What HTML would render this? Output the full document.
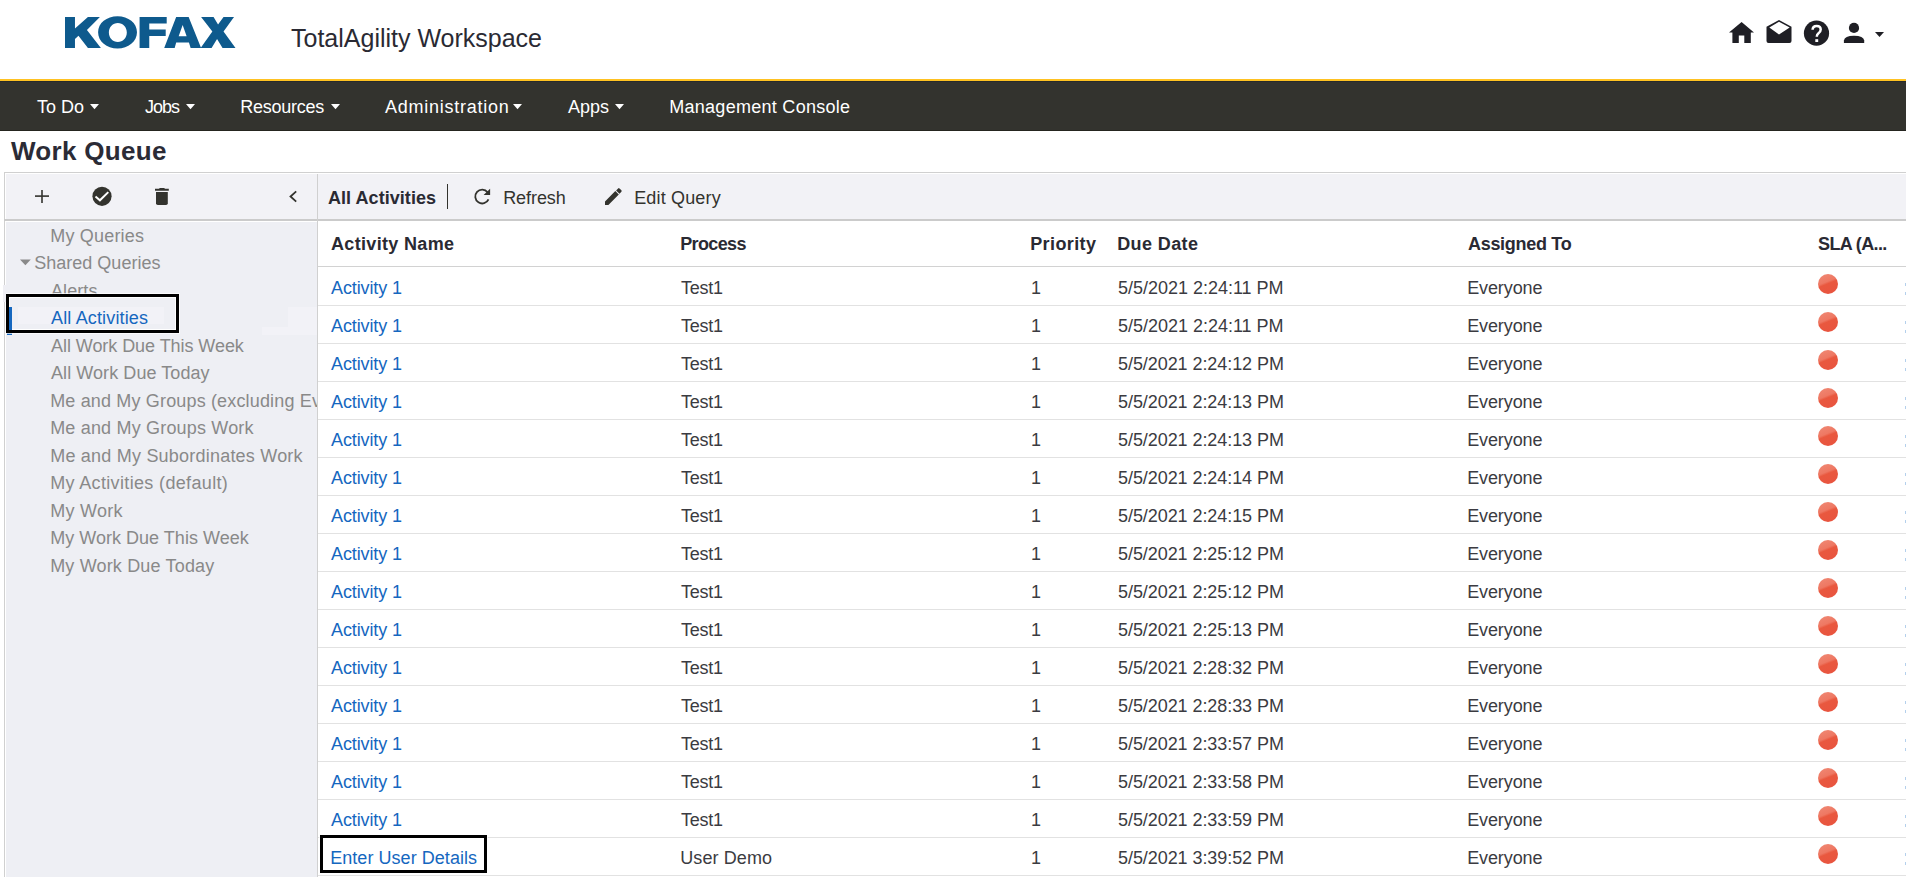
<!DOCTYPE html>
<html><head><meta charset="utf-8"><title>Work Queue</title>
<style>
*{margin:0;padding:0;box-sizing:border-box}
html,body{width:1906px;height:877px;overflow:hidden;background:#fff;font-family:"Liberation Sans",sans-serif;position:relative}
.a{position:absolute}
.t{position:absolute;white-space:nowrap;font-size:18px;line-height:20px;height:20px}
.nav{color:#fff}
.side{color:#898989}
.lnk{color:#1567BF}
.cell{color:#3b3b41}
.hd{font-weight:bold;color:#2a2a33}
.tb{color:#33332e}
</style></head><body>
<div class="a" style="left:0;top:0;width:1906px;height:79px;background:#fff"></div>
<div class="a" style="left:0;top:79px;width:1906px;height:2px;background:#ffc222"></div>
<div class="a" style="left:0;top:81px;width:1906px;height:50px;background:#33332e;border-top:1px solid #272a2b;border-bottom:1px solid #25251f"></div>
<svg class="a" style="left:65px;top:16px" width="171" height="33" viewBox="100 60 1715 330">
<g fill="#0e5a8d">
<path d="M100,70 L200,70 L200,185 L330,70 L450,70 L320,200 L460,380 L330,380 L235,258 L200,290 L200,380 L100,380 Z"/>
<path fill-rule="evenodd" d="M627,62 C735,62 822,130 822,222 C822,315 735,385 627,385 C518,385 432,315 432,222 C432,130 518,62 627,62 Z M630,130 C580,130 540,170 540,225 C540,280 580,320 630,320 C680,320 720,280 720,225 C720,170 680,130 630,130 Z"/>
<path d="M848,70 L1120,70 L1120,135 L945,135 L945,195 L1110,195 L1110,260 L945,260 L945,380 L848,380 Z"/>
<path fill-rule="evenodd" d="M1215,70 L1340,70 L1465,380 L1360,380 L1343,325 L1215,325 L1200,380 L1095,380 Z M1240,262 L1320,262 L1280,150 Z"/>
<path d="M1465,70 L1590,70 L1635,145 L1690,70 L1795,70 L1690,215 L1810,380 L1680,380 L1625,290 L1570,380 L1460,380 L1578,215 Z"/>
</g></svg>
<div class="t" style="left:291px;top:24px;font-size:25px;line-height:28px;height:28px;color:#2a2a33">TotalAgility Workspace</div>
<svg class="a" style="left:1725px;top:16px" width="165" height="34" viewBox="1725 16 165 34">
<g fill="#1f1f25">
<path d="M1741.6,22 L1754,32.5 L1750.8,32.5 L1750.8,43 L1744.3,43 L1744.3,35.4 L1738.8,35.4 L1738.8,43 L1732.4,43 L1732.4,32.5 L1729,32.5 Z"/>
<path fill-rule="evenodd" d="M1779,20 L1791.5,26.8 L1791.5,41 Q1791.5,43 1789.5,43 L1768.5,43 Q1766.5,43 1766.5,41 L1766.5,26.8 Z M1779,21.8 L1769.3,27.6 L1779,34.4 L1789.7,27.6 Z"/>
<circle cx="1816.5" cy="33.2" r="12.6"/>
<circle cx="1854" cy="27.9" r="5.1"/>
<path d="M1843.9,43 L1843.9,40.5 Q1844.5,35.7 1854,35.7 Q1863.6,35.7 1864.2,40.5 L1864.2,43 Z"/>
<path d="M1875,32 L1884,32 L1879.5,37 Z"/>
</g>
<path d="M1812.6,29.8 Q1812.6,25.9 1816.7,25.9 Q1820.7,25.9 1820.7,29.5 Q1820.7,31.7 1818.5,33.3 Q1816.8,34.6 1816.8,36.8" fill="none" stroke="#fff" stroke-width="2.5"/>
<rect x="1815.3" y="39.2" width="2.9" height="2.8" fill="#fff"/>
</svg>
<div class="t ft nav" style="left:37.00px;top:97px;letter-spacing:0.000px;">To Do</div>
<svg class="a" style="left:90px;top:104px" width="10" height="6" viewBox="0 0 10 6"><path d="M0,0 L9,0 L4.5,5.2 Z" fill="#fff"/></svg>
<div class="t ft nav" style="left:145.00px;top:97px;letter-spacing:-1.000px;">Jobs</div>
<svg class="a" style="left:186px;top:104px" width="10" height="6" viewBox="0 0 10 6"><path d="M0,0 L9,0 L4.5,5.2 Z" fill="#fff"/></svg>
<div class="t ft nav" style="left:240.20px;top:97px;letter-spacing:-0.250px;">Resources</div>
<svg class="a" style="left:331px;top:104px" width="10" height="6" viewBox="0 0 10 6"><path d="M0,0 L9,0 L4.5,5.2 Z" fill="#fff"/></svg>
<div class="t ft nav" style="left:385.00px;top:97px;letter-spacing:0.754px;">Administration</div>
<svg class="a" style="left:513px;top:104px" width="10" height="6" viewBox="0 0 10 6"><path d="M0,0 L9,0 L4.5,5.2 Z" fill="#fff"/></svg>
<div class="t ft nav" style="left:568.00px;top:97px;letter-spacing:0.000px;">Apps</div>
<svg class="a" style="left:615px;top:104px" width="10" height="6" viewBox="0 0 10 6"><path d="M0,0 L9,0 L4.5,5.2 Z" fill="#fff"/></svg>
<div class="t ft nav" style="left:669.20px;top:97px;letter-spacing:0.282px;">Management Console</div>
<div class="t" style="left:11px;top:136px;font-size:26px;line-height:30px;height:30px;font-weight:bold;color:#2b2b36;letter-spacing:0.3px">Work Queue</div>
<div class="a" style="left:4px;top:172px;width:1910px;height:710px;border:1px solid #d0d0d0;background:#fff"></div>
<div class="a" style="left:6px;top:174px;width:1900px;height:45px;background:#f2f2f6"></div>
<div class="a" style="left:4px;top:219px;width:1902px;height:2px;background:#cbcbcb"></div>
<div class="a" style="left:6px;top:222px;width:311px;height:655px;background:#eeeff4"></div>
<div class="a" style="left:317px;top:174px;width:1px;height:703px;background:#d0d0d0"></div>
<svg class="a" style="left:30px;top:184px" width="280" height="24" viewBox="30 184 280 24">
<g fill="#33332e">
<rect x="35" y="195.3" width="14" height="1.6"/>
<rect x="41.2" y="190" width="1.6" height="13"/>
<circle cx="102" cy="196.3" r="9.6"/>
<path d="M155,188.8 L159,188.8 Q159.3,187.9 160.2,187.9 L163.8,187.9 Q164.7,187.9 165,188.8 L168.8,188.8 L168.8,190.7 L155,190.7 Z"/>
<path d="M156,191.9 L167.8,191.9 L167.8,203.2 Q167.8,205 166,205 L157.8,205 Q156,205 156,203.2 Z"/>
</g>
<path d="M95.5,196.6 L99.9,200.3 L108.3,192.1" fill="none" stroke="#fff" stroke-width="2"/>
<path d="M296.2,191.3 L290.5,196.5 L296.2,201.7" fill="none" stroke="#33332e" stroke-width="1.8"/>
</svg>
<div class="t hd" style="left:328px;top:188px;color:#2a2a33;letter-spacing:0.05px">All Activities</div>
<div class="a" style="left:447px;top:184px;width:1px;height:25px;background:#33332e"></div>
<svg class="a" style="left:470px;top:184px" width="160" height="24" viewBox="470 184 160 24">
<path d="M487.6,192.3 A6.9,6.9 0 1 0 488.5,199.3" fill="none" stroke="#33332e" stroke-width="1.8"/>
<path d="M490.1,188.8 L490.1,195 L483.6,195 Z" fill="#33332e"/>
<path d="M605,201.4 L615.3,191.1 L618.8,194.5 L608.4,204.9 L605,204.9 Z M616.1,190.4 L618.1,188.4 Q618.8,187.8 619.5,188.4 L621.4,190.3 Q622,191 621.4,191.7 L619.5,193.7 Z" fill="#33332e"/>
</svg>
<div class="t ft tb" style="left:503.20px;top:188px;letter-spacing:-0.066px;">Refresh</div>
<div class="t ft tb" style="left:634.20px;top:188px;letter-spacing:0.156px;">Edit Query</div>
<div class="a" style="left:18px;top:307px;width:146px;height:17px;background:#f2f2f7"></div>
<div class="a" style="left:288px;top:307px;width:29px;height:20px;background:#f2f2f7"></div>
<div class="a" style="left:262px;top:327px;width:55px;height:8px;background:#f2f2f7"></div>
<div class="a" style="left:0;top:0;width:317px;height:877px;overflow:hidden">
<div class="t ft side" style="left:50.20px;top:226px;letter-spacing:0.200px;">My Queries</div>
<div class="t ft side" style="left:34.20px;top:253px;letter-spacing:0.016px;">Shared Queries</div>
<div class="t ft side" style="left:51.00px;top:281px;letter-spacing:0.080px;">Alerts</div>
<div class="t ft lnk" style="left:51.00px;top:308px;letter-spacing:0.154px;">All Activities</div>
<div class="t ft side" style="left:51.00px;top:336px;letter-spacing:-0.057px;">All Work Due This Week</div>
<div class="t ft side" style="left:51.00px;top:363px;letter-spacing:0.071px;">All Work Due Today</div>
<div class="t ft side" style="left:50.20px;top:391px;letter-spacing:0.16px;">Me and My Groups (excluding Everyone)</div>
<div class="t ft side" style="left:50.20px;top:418px;letter-spacing:0.180px;">Me and My Groups Work</div>
<div class="t ft side" style="left:50.20px;top:446px;letter-spacing:0.216px;">Me and My Subordinates Work</div>
<div class="t ft side" style="left:50.20px;top:473px;letter-spacing:0.346px;">My Activities (default)</div>
<div class="t ft side" style="left:50.20px;top:501px;letter-spacing:0.260px;">My Work</div>
<div class="t ft side" style="left:50.20px;top:528px;letter-spacing:0.024px;">My Work Due This Week</div>
<div class="t ft side" style="left:50.20px;top:556px;letter-spacing:0.167px;">My Work Due Today</div>
</div>
<svg class="a" style="left:20px;top:259px" width="12" height="7" viewBox="0 0 12 7"><path d="M0,0.6 L10.8,0.6 L5.4,6.2 Z" fill="#898989"/></svg>
<div class="a" style="left:7px;top:307px;width:5px;height:28px;background:#1567bf"></div>
<div class="t ft hd" style="left:331.00px;top:234px;letter-spacing:0.333px;">Activity Name</div>
<div class="t ft hd" style="left:680.20px;top:234px;letter-spacing:-0.633px;">Process</div>
<div class="t ft hd" style="left:1030.20px;top:234px;letter-spacing:0.400px;">Priority</div>
<div class="t ft hd" style="left:1117.20px;top:234px;letter-spacing:0.400px;">Due Date</div>
<div class="t ft hd" style="left:1468.00px;top:234px;letter-spacing:-0.300px;">Assigned To</div>
<div class="t ft hd" style="left:1818.00px;top:234px;letter-spacing:-0.625px;">SLA (A...</div>
<div class="a" style="left:318px;top:266px;width:1588px;height:1px;background:#d2d2d2"></div>
<div class="t ft lnk" style="left:331.00px;top:278px;letter-spacing:-0.111px;">Activity 1</div>
<div class="t ft cell" style="left:681.00px;top:278px;letter-spacing:-0.250px;">Test1</div>
<div class="t ft cell" style="left:1031.00px;top:278px;">1</div>
<div class="t ft cell" style="left:1118.00px;top:278px;letter-spacing:-0.012px;">5/5/2021 2:24:11 PM</div>
<div class="t ft cell" style="left:1467.20px;top:278px;letter-spacing:-0.114px;">Everyone</div>
<div class="a" style="left:1818px;top:274px;width:20px;height:20px;border-radius:50%;background:linear-gradient(158deg,#f08a76 0%,#ee7863 40%,#e9583f 49%,#e8533f 100%)"></div>
<div class="a" style="left:318px;top:305px;width:1588px;height:1px;background:#e2e2e2"></div>
<div class="t ft lnk" style="left:331.00px;top:316px;letter-spacing:-0.111px;">Activity 1</div>
<div class="t ft cell" style="left:681.00px;top:316px;letter-spacing:-0.250px;">Test1</div>
<div class="t ft cell" style="left:1031.00px;top:316px;">1</div>
<div class="t ft cell" style="left:1118.00px;top:316px;letter-spacing:-0.012px;">5/5/2021 2:24:11 PM</div>
<div class="t ft cell" style="left:1467.20px;top:316px;letter-spacing:-0.114px;">Everyone</div>
<div class="a" style="left:1818px;top:312px;width:20px;height:20px;border-radius:50%;background:linear-gradient(158deg,#f08a76 0%,#ee7863 40%,#e9583f 49%,#e8533f 100%)"></div>
<div class="a" style="left:318px;top:343px;width:1588px;height:1px;background:#e2e2e2"></div>
<div class="t ft lnk" style="left:331.00px;top:354px;letter-spacing:-0.111px;">Activity 1</div>
<div class="t ft cell" style="left:681.00px;top:354px;letter-spacing:-0.250px;">Test1</div>
<div class="t ft cell" style="left:1031.00px;top:354px;">1</div>
<div class="t ft cell" style="left:1118.00px;top:354px;letter-spacing:-0.067px;">5/5/2021 2:24:12 PM</div>
<div class="t ft cell" style="left:1467.20px;top:354px;letter-spacing:-0.114px;">Everyone</div>
<div class="a" style="left:1818px;top:350px;width:20px;height:20px;border-radius:50%;background:linear-gradient(158deg,#f08a76 0%,#ee7863 40%,#e9583f 49%,#e8533f 100%)"></div>
<div class="a" style="left:318px;top:381px;width:1588px;height:1px;background:#e2e2e2"></div>
<div class="t ft lnk" style="left:331.00px;top:392px;letter-spacing:-0.111px;">Activity 1</div>
<div class="t ft cell" style="left:681.00px;top:392px;letter-spacing:-0.250px;">Test1</div>
<div class="t ft cell" style="left:1031.00px;top:392px;">1</div>
<div class="t ft cell" style="left:1118.00px;top:392px;letter-spacing:-0.067px;">5/5/2021 2:24:13 PM</div>
<div class="t ft cell" style="left:1467.20px;top:392px;letter-spacing:-0.114px;">Everyone</div>
<div class="a" style="left:1818px;top:388px;width:20px;height:20px;border-radius:50%;background:linear-gradient(158deg,#f08a76 0%,#ee7863 40%,#e9583f 49%,#e8533f 100%)"></div>
<div class="a" style="left:318px;top:419px;width:1588px;height:1px;background:#e2e2e2"></div>
<div class="t ft lnk" style="left:331.00px;top:430px;letter-spacing:-0.111px;">Activity 1</div>
<div class="t ft cell" style="left:681.00px;top:430px;letter-spacing:-0.250px;">Test1</div>
<div class="t ft cell" style="left:1031.00px;top:430px;">1</div>
<div class="t ft cell" style="left:1118.00px;top:430px;letter-spacing:-0.067px;">5/5/2021 2:24:13 PM</div>
<div class="t ft cell" style="left:1467.20px;top:430px;letter-spacing:-0.114px;">Everyone</div>
<div class="a" style="left:1818px;top:426px;width:20px;height:20px;border-radius:50%;background:linear-gradient(158deg,#f08a76 0%,#ee7863 40%,#e9583f 49%,#e8533f 100%)"></div>
<div class="a" style="left:318px;top:457px;width:1588px;height:1px;background:#e2e2e2"></div>
<div class="t ft lnk" style="left:331.00px;top:468px;letter-spacing:-0.111px;">Activity 1</div>
<div class="t ft cell" style="left:681.00px;top:468px;letter-spacing:-0.250px;">Test1</div>
<div class="t ft cell" style="left:1031.00px;top:468px;">1</div>
<div class="t ft cell" style="left:1118.00px;top:468px;letter-spacing:-0.067px;">5/5/2021 2:24:14 PM</div>
<div class="t ft cell" style="left:1467.20px;top:468px;letter-spacing:-0.114px;">Everyone</div>
<div class="a" style="left:1818px;top:464px;width:20px;height:20px;border-radius:50%;background:linear-gradient(158deg,#f08a76 0%,#ee7863 40%,#e9583f 49%,#e8533f 100%)"></div>
<div class="a" style="left:318px;top:495px;width:1588px;height:1px;background:#e2e2e2"></div>
<div class="t ft lnk" style="left:331.00px;top:506px;letter-spacing:-0.111px;">Activity 1</div>
<div class="t ft cell" style="left:681.00px;top:506px;letter-spacing:-0.250px;">Test1</div>
<div class="t ft cell" style="left:1031.00px;top:506px;">1</div>
<div class="t ft cell" style="left:1118.00px;top:506px;letter-spacing:-0.067px;">5/5/2021 2:24:15 PM</div>
<div class="t ft cell" style="left:1467.20px;top:506px;letter-spacing:-0.114px;">Everyone</div>
<div class="a" style="left:1818px;top:502px;width:20px;height:20px;border-radius:50%;background:linear-gradient(158deg,#f08a76 0%,#ee7863 40%,#e9583f 49%,#e8533f 100%)"></div>
<div class="a" style="left:318px;top:533px;width:1588px;height:1px;background:#e2e2e2"></div>
<div class="t ft lnk" style="left:331.00px;top:544px;letter-spacing:-0.111px;">Activity 1</div>
<div class="t ft cell" style="left:681.00px;top:544px;letter-spacing:-0.250px;">Test1</div>
<div class="t ft cell" style="left:1031.00px;top:544px;">1</div>
<div class="t ft cell" style="left:1118.00px;top:544px;letter-spacing:-0.067px;">5/5/2021 2:25:12 PM</div>
<div class="t ft cell" style="left:1467.20px;top:544px;letter-spacing:-0.114px;">Everyone</div>
<div class="a" style="left:1818px;top:540px;width:20px;height:20px;border-radius:50%;background:linear-gradient(158deg,#f08a76 0%,#ee7863 40%,#e9583f 49%,#e8533f 100%)"></div>
<div class="a" style="left:318px;top:571px;width:1588px;height:1px;background:#e2e2e2"></div>
<div class="t ft lnk" style="left:331.00px;top:582px;letter-spacing:-0.111px;">Activity 1</div>
<div class="t ft cell" style="left:681.00px;top:582px;letter-spacing:-0.250px;">Test1</div>
<div class="t ft cell" style="left:1031.00px;top:582px;">1</div>
<div class="t ft cell" style="left:1118.00px;top:582px;letter-spacing:-0.067px;">5/5/2021 2:25:12 PM</div>
<div class="t ft cell" style="left:1467.20px;top:582px;letter-spacing:-0.114px;">Everyone</div>
<div class="a" style="left:1818px;top:578px;width:20px;height:20px;border-radius:50%;background:linear-gradient(158deg,#f08a76 0%,#ee7863 40%,#e9583f 49%,#e8533f 100%)"></div>
<div class="a" style="left:318px;top:609px;width:1588px;height:1px;background:#e2e2e2"></div>
<div class="t ft lnk" style="left:331.00px;top:620px;letter-spacing:-0.111px;">Activity 1</div>
<div class="t ft cell" style="left:681.00px;top:620px;letter-spacing:-0.250px;">Test1</div>
<div class="t ft cell" style="left:1031.00px;top:620px;">1</div>
<div class="t ft cell" style="left:1118.00px;top:620px;letter-spacing:-0.067px;">5/5/2021 2:25:13 PM</div>
<div class="t ft cell" style="left:1467.20px;top:620px;letter-spacing:-0.114px;">Everyone</div>
<div class="a" style="left:1818px;top:616px;width:20px;height:20px;border-radius:50%;background:linear-gradient(158deg,#f08a76 0%,#ee7863 40%,#e9583f 49%,#e8533f 100%)"></div>
<div class="a" style="left:318px;top:647px;width:1588px;height:1px;background:#e2e2e2"></div>
<div class="t ft lnk" style="left:331.00px;top:658px;letter-spacing:-0.111px;">Activity 1</div>
<div class="t ft cell" style="left:681.00px;top:658px;letter-spacing:-0.250px;">Test1</div>
<div class="t ft cell" style="left:1031.00px;top:658px;">1</div>
<div class="t ft cell" style="left:1118.00px;top:658px;letter-spacing:-0.067px;">5/5/2021 2:28:32 PM</div>
<div class="t ft cell" style="left:1467.20px;top:658px;letter-spacing:-0.114px;">Everyone</div>
<div class="a" style="left:1818px;top:654px;width:20px;height:20px;border-radius:50%;background:linear-gradient(158deg,#f08a76 0%,#ee7863 40%,#e9583f 49%,#e8533f 100%)"></div>
<div class="a" style="left:318px;top:685px;width:1588px;height:1px;background:#e2e2e2"></div>
<div class="t ft lnk" style="left:331.00px;top:696px;letter-spacing:-0.111px;">Activity 1</div>
<div class="t ft cell" style="left:681.00px;top:696px;letter-spacing:-0.250px;">Test1</div>
<div class="t ft cell" style="left:1031.00px;top:696px;">1</div>
<div class="t ft cell" style="left:1118.00px;top:696px;letter-spacing:-0.067px;">5/5/2021 2:28:33 PM</div>
<div class="t ft cell" style="left:1467.20px;top:696px;letter-spacing:-0.114px;">Everyone</div>
<div class="a" style="left:1818px;top:692px;width:20px;height:20px;border-radius:50%;background:linear-gradient(158deg,#f08a76 0%,#ee7863 40%,#e9583f 49%,#e8533f 100%)"></div>
<div class="a" style="left:318px;top:723px;width:1588px;height:1px;background:#e2e2e2"></div>
<div class="t ft lnk" style="left:331.00px;top:734px;letter-spacing:-0.111px;">Activity 1</div>
<div class="t ft cell" style="left:681.00px;top:734px;letter-spacing:-0.250px;">Test1</div>
<div class="t ft cell" style="left:1031.00px;top:734px;">1</div>
<div class="t ft cell" style="left:1118.00px;top:734px;letter-spacing:-0.067px;">5/5/2021 2:33:57 PM</div>
<div class="t ft cell" style="left:1467.20px;top:734px;letter-spacing:-0.114px;">Everyone</div>
<div class="a" style="left:1818px;top:730px;width:20px;height:20px;border-radius:50%;background:linear-gradient(158deg,#f08a76 0%,#ee7863 40%,#e9583f 49%,#e8533f 100%)"></div>
<div class="a" style="left:318px;top:761px;width:1588px;height:1px;background:#e2e2e2"></div>
<div class="t ft lnk" style="left:331.00px;top:772px;letter-spacing:-0.111px;">Activity 1</div>
<div class="t ft cell" style="left:681.00px;top:772px;letter-spacing:-0.250px;">Test1</div>
<div class="t ft cell" style="left:1031.00px;top:772px;">1</div>
<div class="t ft cell" style="left:1118.00px;top:772px;letter-spacing:-0.067px;">5/5/2021 2:33:58 PM</div>
<div class="t ft cell" style="left:1467.20px;top:772px;letter-spacing:-0.114px;">Everyone</div>
<div class="a" style="left:1818px;top:768px;width:20px;height:20px;border-radius:50%;background:linear-gradient(158deg,#f08a76 0%,#ee7863 40%,#e9583f 49%,#e8533f 100%)"></div>
<div class="a" style="left:318px;top:799px;width:1588px;height:1px;background:#e2e2e2"></div>
<div class="t ft lnk" style="left:331.00px;top:810px;letter-spacing:-0.111px;">Activity 1</div>
<div class="t ft cell" style="left:681.00px;top:810px;letter-spacing:-0.250px;">Test1</div>
<div class="t ft cell" style="left:1031.00px;top:810px;">1</div>
<div class="t ft cell" style="left:1118.00px;top:810px;letter-spacing:-0.067px;">5/5/2021 2:33:59 PM</div>
<div class="t ft cell" style="left:1467.20px;top:810px;letter-spacing:-0.114px;">Everyone</div>
<div class="a" style="left:1818px;top:806px;width:20px;height:20px;border-radius:50%;background:linear-gradient(158deg,#f08a76 0%,#ee7863 40%,#e9583f 49%,#e8533f 100%)"></div>
<div class="a" style="left:318px;top:837px;width:1588px;height:1px;background:#e2e2e2"></div>
<div class="t ft lnk" style="left:330.20px;top:848px;letter-spacing:0.047px;">Enter User Details</div>
<div class="t ft cell" style="left:680.20px;top:848px;letter-spacing:0.100px;">User Demo</div>
<div class="t ft cell" style="left:1031.00px;top:848px;">1</div>
<div class="t ft cell" style="left:1118.00px;top:848px;letter-spacing:-0.067px;">5/5/2021 3:39:52 PM</div>
<div class="t ft cell" style="left:1467.20px;top:848px;letter-spacing:-0.114px;">Everyone</div>
<div class="a" style="left:1818px;top:844px;width:20px;height:20px;border-radius:50%;background:linear-gradient(158deg,#f08a76 0%,#ee7863 40%,#e9583f 49%,#e8533f 100%)"></div>
<div class="a" style="left:318px;top:875px;width:1588px;height:1px;background:#e2e2e2"></div>
<div class="a" style="left:6px;top:294px;width:173px;height:39px;border:3px solid #000;box-shadow:inset 0 0 0 1px #fff,0 0 0 1px rgba(255,255,255,.7)"></div>
<div class="a" style="left:320px;top:835px;width:167px;height:38px;border:3px solid #000;box-shadow:inset 0 0 0 1px #fff,0 0 0 1px rgba(255,255,255,.7)"></div>
<div class="a" style="left:9px;top:307px;width:3px;height:23px;background:#1567bf"></div>
<div class="a" style="left:1905px;top:283px;width:1px;height:3px;background:#b4d0ec"></div>
<div class="a" style="left:1905px;top:292px;width:1px;height:3px;background:#b4d0ec"></div>
<div class="a" style="left:1905px;top:321px;width:1px;height:3px;background:#b4d0ec"></div>
<div class="a" style="left:1905px;top:330px;width:1px;height:3px;background:#b4d0ec"></div>
<div class="a" style="left:1905px;top:359px;width:1px;height:3px;background:#b4d0ec"></div>
<div class="a" style="left:1905px;top:368px;width:1px;height:3px;background:#b4d0ec"></div>
<div class="a" style="left:1905px;top:397px;width:1px;height:3px;background:#b4d0ec"></div>
<div class="a" style="left:1905px;top:406px;width:1px;height:3px;background:#b4d0ec"></div>
<div class="a" style="left:1905px;top:435px;width:1px;height:3px;background:#b4d0ec"></div>
<div class="a" style="left:1905px;top:444px;width:1px;height:3px;background:#b4d0ec"></div>
<div class="a" style="left:1905px;top:473px;width:1px;height:3px;background:#b4d0ec"></div>
<div class="a" style="left:1905px;top:482px;width:1px;height:3px;background:#b4d0ec"></div>
<div class="a" style="left:1905px;top:511px;width:1px;height:3px;background:#b4d0ec"></div>
<div class="a" style="left:1905px;top:520px;width:1px;height:3px;background:#b4d0ec"></div>
<div class="a" style="left:1905px;top:549px;width:1px;height:3px;background:#b4d0ec"></div>
<div class="a" style="left:1905px;top:558px;width:1px;height:3px;background:#b4d0ec"></div>
<div class="a" style="left:1905px;top:587px;width:1px;height:3px;background:#b4d0ec"></div>
<div class="a" style="left:1905px;top:596px;width:1px;height:3px;background:#b4d0ec"></div>
<div class="a" style="left:1905px;top:625px;width:1px;height:3px;background:#b4d0ec"></div>
<div class="a" style="left:1905px;top:634px;width:1px;height:3px;background:#b4d0ec"></div>
<div class="a" style="left:1905px;top:663px;width:1px;height:3px;background:#b4d0ec"></div>
<div class="a" style="left:1905px;top:672px;width:1px;height:3px;background:#b4d0ec"></div>
<div class="a" style="left:1905px;top:701px;width:1px;height:3px;background:#b4d0ec"></div>
<div class="a" style="left:1905px;top:710px;width:1px;height:3px;background:#b4d0ec"></div>
<div class="a" style="left:1905px;top:739px;width:1px;height:3px;background:#b4d0ec"></div>
<div class="a" style="left:1905px;top:748px;width:1px;height:3px;background:#b4d0ec"></div>
<div class="a" style="left:1905px;top:777px;width:1px;height:3px;background:#b4d0ec"></div>
<div class="a" style="left:1905px;top:786px;width:1px;height:3px;background:#b4d0ec"></div>
<div class="a" style="left:1905px;top:815px;width:1px;height:3px;background:#b4d0ec"></div>
<div class="a" style="left:1905px;top:824px;width:1px;height:3px;background:#b4d0ec"></div>
<div class="a" style="left:1905px;top:853px;width:1px;height:3px;background:#b4d0ec"></div>
<div class="a" style="left:1905px;top:862px;width:1px;height:3px;background:#b4d0ec"></div>
<div class="a" style="left:3px;top:285px;width:3px;height:17px;background:#efeff4"></div>
</body></html>
